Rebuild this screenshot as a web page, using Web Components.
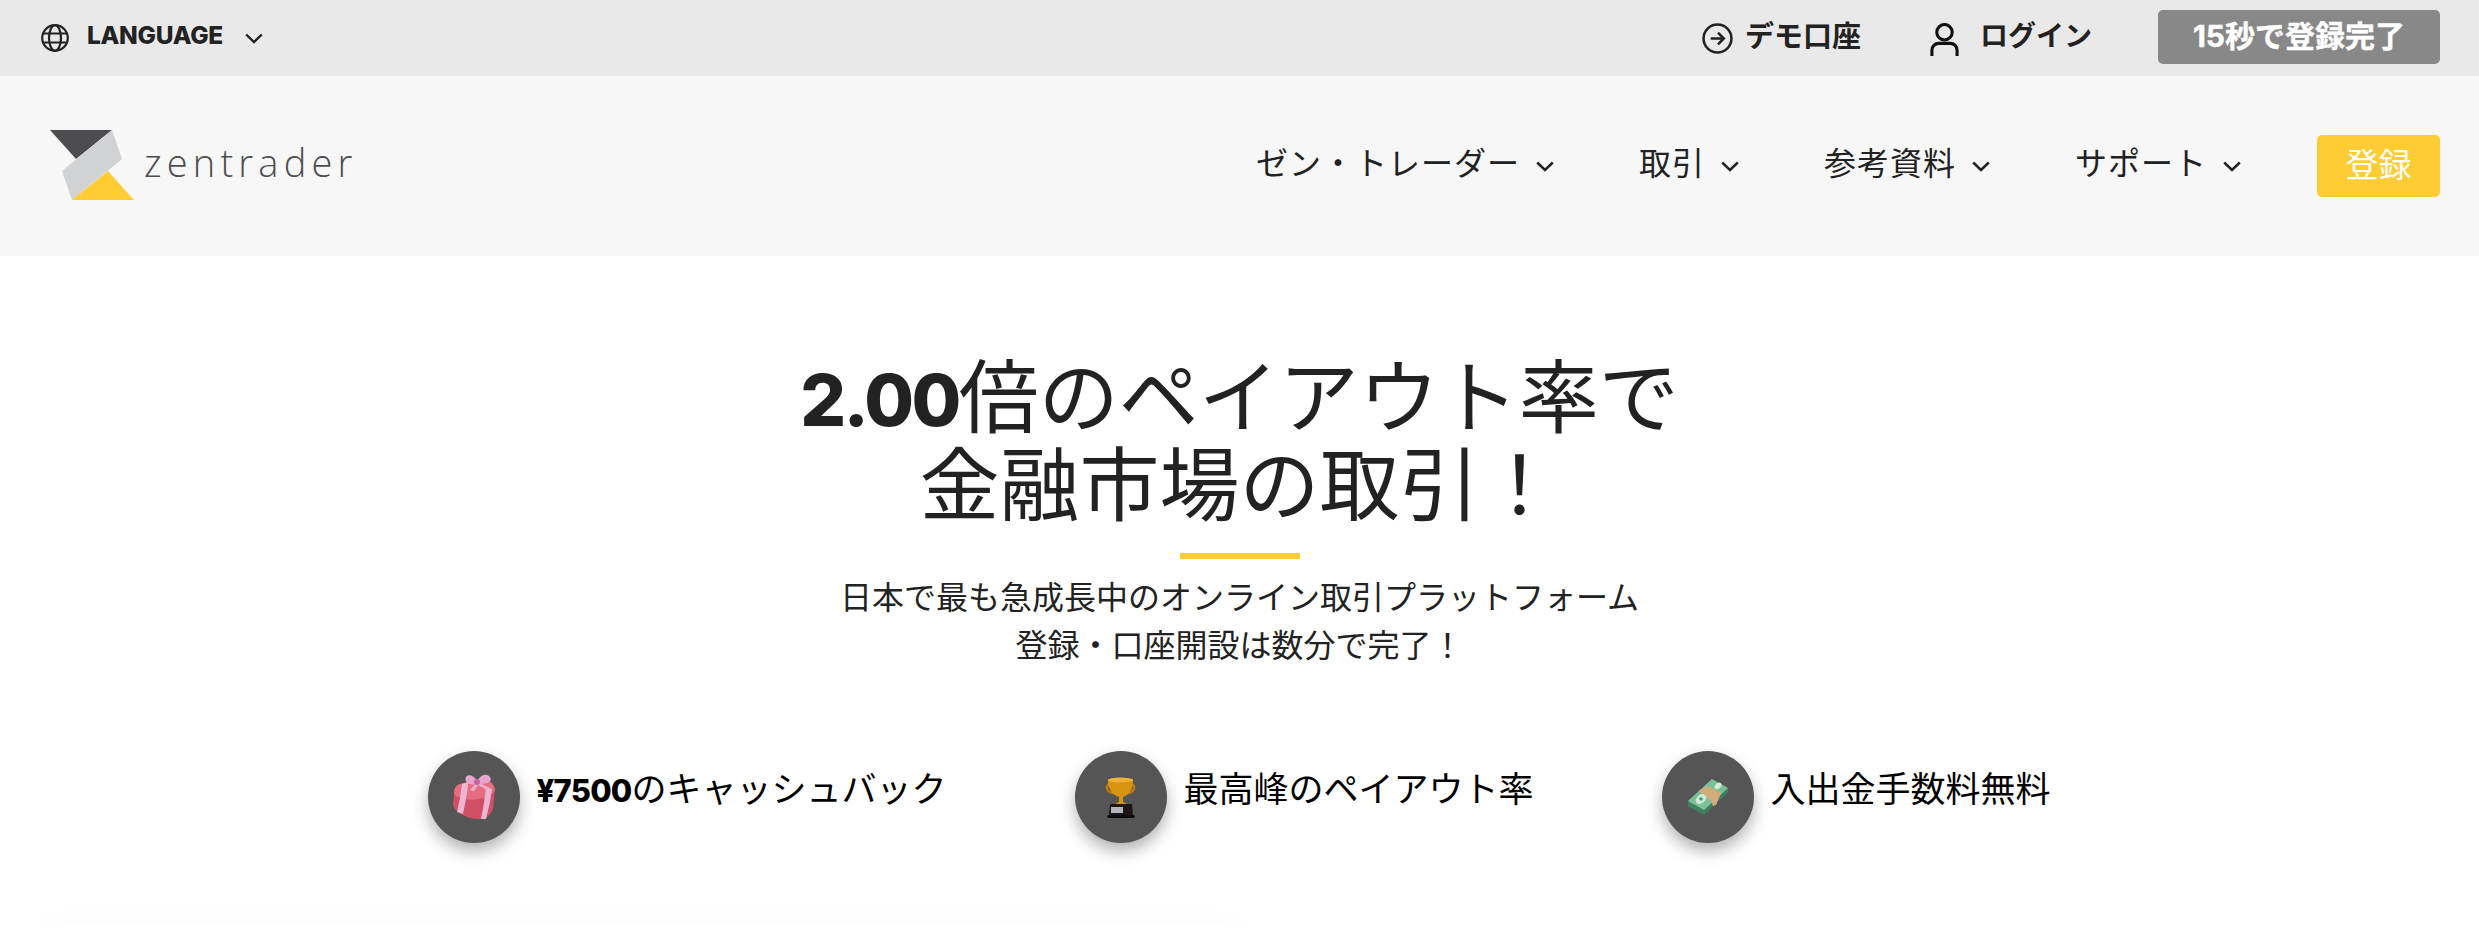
<!DOCTYPE html>
<html lang="ja">
<head>
<meta charset="utf-8">
<title>zentrader</title>
<style>
html, body { margin: 0; padding: 0; background: #fff; height: 100%; overflow: hidden; }
body { font-family: "Inter", "Noto Sans CJK JP", sans-serif; color: #222; }
</style>
</head>
<body>
<top-bar></top-bar>
<main-nav></main-nav>
<hero-section>
  <feature-item text="のキャッシュバック" strong="¥7500" icon="gift"></feature-item>
  <feature-item text="最高峰のペイアウト率" icon="trophy"></feature-item>
  <feature-item text="入出金手数料無料" icon="money"></feature-item>
</hero-section>
<script>
"use strict";
const FONT = '"Inter", "Noto Sans CJK JP", sans-serif';
const chevron = (w, h, sw) => `<svg width="${w}" height="${h}" viewBox="0 0 18 11" fill="none" stroke="#222" stroke-width="${sw}"><path d="M1.2 1.5 9 9 16.8 1.5"/></svg>`;

class TopBar extends HTMLElement {
    constructor() {
        super();
        this.attachShadow({mode: "open"});
    }

    connectedCallback() {
        this.shadowRoot.innerHTML = `${this.render()} ${this.styles()}`;
    }

    render() {
        return `
        <div class="left">
            <svg class="globe" width="28" height="28" viewBox="0 0 28 28" fill="none" stroke="#222" stroke-width="2.2">
                <circle cx="14" cy="14" r="12.8"/>
                <ellipse cx="14" cy="14" rx="6" ry="12.8"/>
                <path d="M2.5 9.5h23M2.5 18.5h23"/>
            </svg>
            <span class="lang">LANGUAGE</span>
            ${chevron(18, 11, 2.4)}
        </div>
        <div class="right">
            <a class="demo">
                <svg width="31" height="31" viewBox="0 0 32 32" fill="none" stroke="#222" stroke-width="2.6">
                    <circle cx="16" cy="16" r="14.4"/>
                    <path d="M9 16h13M16.5 10l6 6-6 6"/>
                </svg>
                <span>デモ口座</span>
            </a>
            <a class="login">
                <svg width="29" height="33" viewBox="0 0 30 34" fill="none" stroke="#111" stroke-width="3.2">
                    <circle cx="15" cy="9.5" r="8"/>
                    <path d="M2 34v-6a7 7 0 0 1 7-7h12a7 7 0 0 1 7 7v6"/>
                </svg>
                <span>ログイン</span>
            </a>
            <a class="signup"><span>15秒で登録完了</span></a>
        </div>
        `;
    }

    styles() {
        return `
        <style>
        :host {
            display: flex;
            justify-content: space-between;
            align-items: center;
            height: 76px;
            padding: 0 39px 0 41px;
            background: #e9e9e9;
            font-family: ${FONT};
            color: #222;
            box-sizing: border-box;
        }
        .left, .right { display: flex; align-items: center; }
        .lang { font-size: 24.5px; font-weight: 800; margin: 0 22px 6px 18px; letter-spacing: -0.3px; }
        a { display: flex; align-items: center; font-size: 29px; font-weight: 700; }
        a span { margin-bottom: 8px; }
        .demo { gap: 12px; margin-right: 69px; }
        .login { gap: 21px; margin-right: 66px; font-size: 28px; }
        .login svg { margin-top: 3px; }
        .signup {
            width: 282px;
            height: 54px;
            justify-content: center;
            background: #888;
            color: #fff;
            border-radius: 5px;
            font-size: 30px;
            margin-top: -2px;
            -webkit-text-stroke: .4px #fff;
        }
        .signup span { margin-bottom: 6px; }
        </style>
        `;
    }
}

class MainNav extends HTMLElement {
    constructor() {
        super();
        this.attachShadow({mode: "open"});
    }

    connectedCallback() {
        this.shadowRoot.innerHTML = `${this.render()} ${this.styles()}`;
    }

    render() {
        const items = ["ゼン・トレーダー", "取引", "参考資料", "サポート"];
        return `
        <div class="logo">
            <svg width="90" height="76" viewBox="48 129 90 76">
                <path d="M50 131h62L76 160z" fill="#4d4d4f"/>
                <path d="M112 131l10 29-50 41-10-29z" fill="#d1d2d4"/>
                <path d="M108 172l26 29H72z" fill="#ffcc33"/>
            </svg>
            <span class="word">zentrader</span>
        </div>
        <nav>
            ${items.map(i => `<span class="item"><span>${i}</span>${chevron(18, 11, 2.5)}</span>`).join("")}
            <a class="cta"><span>登録</span></a>
        </nav>
        `;
    }

    styles() {
        return `
        <style>
        :host {
            display: flex;
            justify-content: space-between;
            align-items: center;
            height: 180px;
            padding: 0 39px 0 48px;
            background: #f7f7f7;
            font-family: ${FONT};
            color: #222;
            box-sizing: border-box;
        }
        .logo { display: flex; align-items: center; }
        .word {
            font-family: "Open Sans", sans-serif;
            font-weight: 300;
            font-size: 38px;
            letter-spacing: 5.2px;
            color: #4d4d4f;
            margin: 0 0 8px 6px;
        }
        nav { display: flex; align-items: center; }
        .item { display: flex; align-items: center; gap: 16px; font-size: 32px; letter-spacing: 1px; margin-right: 85px; font-weight: 400; }
        .item span { margin-bottom: 11px; }
        .item svg { margin-top: 1px; }
        .item:last-of-type { margin-right: 76px; }
        .cta {
            display: flex;
            align-items: center;
            justify-content: center;
            width: 123px;
            height: 62px;
            background: #ffcc33;
            color: #fff;
            font-size: 33px;
            border-radius: 5px;
        }
        .cta span { margin-bottom: 7px; }
        </style>
        `;
    }
}

class HeroSection extends HTMLElement {
    constructor() {
        super();
        this.attachShadow({mode: "open"});
    }

    connectedCallback() {
        this.shadowRoot.innerHTML = `${this.render()} ${this.styles()}`;
    }

    render() {
        return `
        <h1><b>2.00</b>倍のペイアウト率で<br>金融市場の取引！</h1>
        <div class="bar"></div>
        <p>日本で最も急成長中のオンライン取引プラットフォーム<br>登録・口座開設は数分で完了！</p>
        <div class="features"><slot></slot></div>
        <div class="card"></div>
        `;
    }

    styles() {
        return `
        <style>
        :host {
            display: flex;
            flex-direction: column;
            align-items: center;
            padding-top: 97px;
            font-family: ${FONT};
            color: #222;
        }
        h1 { margin: 0; font-size: 80px; line-height: 88px; font-weight: 400; text-align: center; }
        h1 b { font-weight: 800; font-size: 72px; letter-spacing: -2.5px; line-height: 0; }
        .bar { width: 120px; height: 6px; background: #ffcc33; margin-top: 24px; }
        p { margin: 15px 0 0; font-size: 32px; line-height: 48px; text-align: center; }
        .features { display: flex; gap: 129px; margin-top: 81px; }
        .card {
            align-self: flex-start;
            width: 1200px;
            height: 3px;
            margin: 82px 0 0 42px;
            background: #fff;
            box-shadow: 0 0 26px rgba(0, 0, 0, .09);
        }
        </style>
        `;
    }
}

class FeatureItem extends HTMLElement {
    constructor() {
        super();
        this.attachShadow({mode: "open"});
    }

    connectedCallback() {
        this.shadowRoot.innerHTML = `${this.render()} ${this.styles()}`;
    }

    // emoji style pictures, drawn on the 92px circle
    icon() {
        const name = this.getAttribute("icon");
        if (name === "gift") {
            return `<svg width="92" height="92" viewBox="0 0 92 92">
                <path d="M26 42q0-7 6-9l20-5q13 0 15 11l-2 18q-2 9-11 11-14 1-24-7-5-4-5-8z" fill="#cf4f65"/>
                <path d="M26 42q0-7 6-9l20-5q13 0 15 11-3 7-16 9-13 2-21-2-4-2-4-4z" fill="#e46d7f"/>
                <path d="M34 33l6-2 0 4-2 13-3 15-6-2 3-14z" fill="#ecb6d3"/>
                <path d="M58 36l6 2-2 13-4 17-5 0 3-16z" fill="#ecb6d3"/>
                <path d="M49 33c-8 2-13-2-11-7 2-3 8-2 11 4 3-5 8-8 12-5 4 3 2 9-12 8z" fill="#e8a5cf"/>
                <path d="M49 31l-7 8 4 1 4-6 9 5 3-2z" fill="#e9aed2"/>
                <circle cx="49" cy="31" r="3" fill="#c9649c"/>
            </svg>`;
        }
        if (name === "trophy") {
            return `<svg width="92" height="92" viewBox="0 0 92 92">
                <path d="M34 33c-4 3-2 9 5 9M57 33c4 3 2 9-5 9" fill="none" stroke="#b97c10" stroke-width="2.4"/>
                <path d="M33 29c0-2 24-2 25 0 0 10-4 15-10 17v5l4 2H40l4-2v-5c-7-2-11-8-11-17z" fill="#d8930f"/>
                <ellipse cx="45.500" cy="29" rx="12.500" ry="2.600" fill="#efb136"/>
                <path d="M35 53h22l1 11H34z" fill="#1c1618"/>
                <rect x="36" y="56" width="12" height="6" fill="#b4b2ba"/>
                <path d="M33 64h26l1 2-2 1H34l-2-1z" fill="#0e0b0c"/>
            </svg>`;
        }
        return `<svg width="92" height="92" viewBox="0 0 92 92">
            <path d="M26 50 50 28l16 9v4L42 64 26 55z" fill="#3f8060"/>
            <path d="M26 50 50 28l16 9-24 22z" fill="#7cc097"/>
            <ellipse cx="39" cy="48" rx="6" ry="4" fill="#d3ecd9" transform="rotate(-40 39 48)"/>
            <circle cx="39" cy="48" r="1.800" fill="#4f9472"/>
            <ellipse cx="56" cy="35" rx="4" ry="2.600" fill="#d3ecd9" transform="rotate(-40 56 35)"/>
            <path d="M36 40l10-5 13 7-5 12-3 1c-1-6-7-11-15-15z" fill="#d3ab7d"/>
        </svg>`;
    }

    render() {
        const strong = this.getAttribute("strong");
        return `
        <div class="circle">${this.icon()}</div>
        <span class="text">${strong ? `<b>${strong}</b>` : ""}${this.getAttribute("text")}</span>
        `;
    }

    styles() {
        return `
        <style>
        :host { display: flex; gap: 16px; align-items: flex-start; }
        .circle {
            width: 92px;
            height: 92px;
            border-radius: 50%;
            background: #555;
            box-shadow: 0 8px 16px rgba(0, 0, 0, .3);
            flex: none;
        }
        svg { display: block; }
        .text { font-size: 35px; line-height: 50px; color: #000; margin-top: 13px; white-space: nowrap; }
        b { font-weight: 800; font-size: 31px; letter-spacing: -.8px; line-height: 0; }
        </style>
        `;
    }
}

customElements.define("top-bar", TopBar);
customElements.define("main-nav", MainNav);
customElements.define("hero-section", HeroSection);
customElements.define("feature-item", FeatureItem);
</script>
</body>
</html>
